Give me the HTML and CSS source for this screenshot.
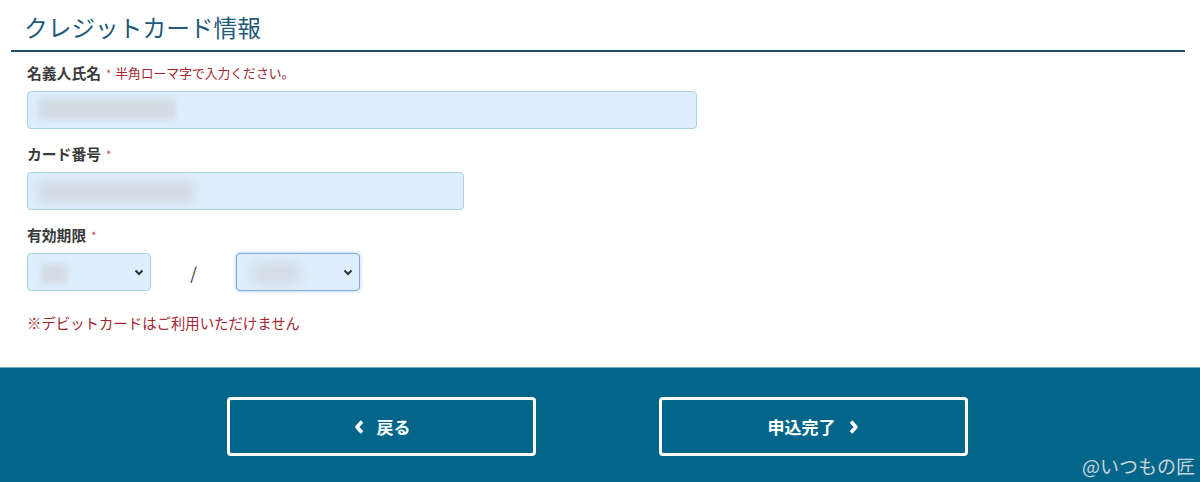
FILE: index.html
```html
<!DOCTYPE html>
<html lang="ja">
<head>
  <meta charset="UTF-8" />
  <title>クレジットカード情報</title>
  <link rel="stylesheet" href="styles.css">
</head>
<body>
  <section class="card-info">
    <h2 class="section-title">クレジットカード情報</h2>

    <div class="form-body">
      <div class="field">
        <label class="field-label">名義人氏名<span class="req">*</span><span class="hint">半角ローマ字で入力ください。</span></label>
        <div class="text-input wide"><span class="blur blur-name"></span></div>
      </div>

      <div class="field">
        <label class="field-label">カード番号<span class="req">*</span></label>
        <div class="text-input medium"><span class="blur blur-number"></span></div>
      </div>

      <div class="field">
        <label class="field-label">有効期限<span class="req">*</span></label>
        <div class="expiry">
          <div class="select-box">
            <span class="blur blur-month"></span>
            <svg class="chev" width="10" height="7" viewBox="0 0 10 7"><path d="M1.5 1.5 L5 5 L8.5 1.5" fill="none" stroke="#333" stroke-width="2"/></svg>
          </div>
          <span class="slash">/</span>
          <div class="select-box focused">
            <span class="blur blur-year"></span>
            <svg class="chev" width="10" height="7" viewBox="0 0 10 7"><path d="M1.5 1.5 L5 5 L8.5 1.5" fill="none" stroke="#333" stroke-width="2"/></svg>
          </div>
        </div>
      </div>

      <p class="note">※デビットカードはご利用いただけません</p>
    </div>
  </section>

  <footer class="action-bar">
    <button class="nav-btn">
      <svg width="12" height="16" viewBox="0 0 12 16"><path d="M9 2.5 L4 8 L9 13.5" fill="none" stroke="#fff" stroke-width="3.6" stroke-linejoin="round"/></svg>
      戻る
    </button>
    <button class="nav-btn">
      申込完了
      <svg width="12" height="16" viewBox="0 0 12 16"><path d="M3 2.5 L8 8 L3 13.5" fill="none" stroke="#fff" stroke-width="3.6" stroke-linejoin="round"/></svg>
    </button>
    <span class="watermark">@いつもの匠</span>
  </footer>
</body>
</html>
```

FILE: styles.css
```css
body {
  margin: 0;
  background: #fff;
  font-family: "Noto Sans CJK JP", "Noto Sans", sans-serif;
  color: #333;
  height: 482px;
  display: flex;
  flex-direction: column;
  overflow: hidden;
}
.card-info {
  height: 367px;
}
.section-title {
  margin: 0 15px 0 11px;
  padding: 9px 0 4px 13px;
  font-size: 23.7px;
  line-height: 37px;
  font-weight: 400;
  color: #22597a;
  border-bottom: 2px solid #1c4e6c;
}
.form-body {
  padding: 11px 27px 0;
  display: flex;
  flex-direction: column;
}
.field {
  margin-bottom: 15px;
}
.field-label {
  display: flex;
  align-items: center;
  font-size: 14.8px;
  line-height: 20px;
  font-weight: 700;
  color: #3a3a3a;
  margin-bottom: 8px;
}
.req {
  color: #c0474f;
  font-size: 11px;
  font-weight: 400;
  margin-left: 5px;
}
.hint {
  color: #a3262e;
  font-size: 12.8px;
  font-weight: 400;
  margin-left: 4px;
}
.text-input {
  height: 36px;
  background: #dfeefd;
  border: 1px solid #a9d4e4;
  border-radius: 4px;
  position: relative;
}
.wide {
  width: 668px;
}
.medium {
  width: 435px;
}
.blur {
  position: absolute;
  background: #d3dce5;
  filter: blur(3px);
}
.blur-name {
  left: 10px;
  top: 6px;
  width: 138px;
  height: 22px;
}
.blur-number {
  left: 10px;
  top: 7px;
  width: 156px;
  height: 23px;
  filter: blur(5px);
}
.blur-month {
  left: 13px;
  top: 10px;
  width: 26px;
  height: 20px;
}
.blur-year {
  left: 16px;
  top: 9px;
  width: 48px;
  height: 22px;
  filter: blur(6px);
}
.expiry {
  display: flex;
  align-items: center;
}
.select-box {
  width: 122px;
  height: 36px;
  background: #dfeefd;
  border: 1px solid #a9d4e4;
  border-radius: 4px;
  position: relative;
}
.select-box.focused {
  border-color: #7ea9d4;
  box-shadow: 0 0 4px rgba(110, 160, 220, 0.55);
}
.chev {
  position: absolute;
  right: 6px;
  top: 15px;
}
.slash {
  width: 85px;
  text-align: center;
  font-size: 17px;
  color: #333;
}
.note {
  margin: 7px 0 0;
  font-size: 14.4px;
  line-height: 20px;
  color: #a3262e;
}
.action-bar {
  flex-grow: 1;
  background: #02668a;
  border-top: 1px solid #6fa7bd;
  display: flex;
  justify-content: center;
  align-items: flex-start;
  gap: 123px;
  padding: 29px 5px 0 0;
  position: relative;
}
.nav-btn {
  width: 309px;
  height: 59px;
  background: transparent;
  border: 3px solid #fff;
  border-radius: 4px;
  color: #fff;
  font-family: inherit;
  font-size: 17px;
  font-weight: 700;
  display: flex;
  align-items: center;
  justify-content: center;
  gap: 12px;
  padding: 0;
}
.watermark {
  position: absolute;
  right: 5px;
  bottom: 3px;
  font-size: 19px;
  color: #c9d4db;
}
```
